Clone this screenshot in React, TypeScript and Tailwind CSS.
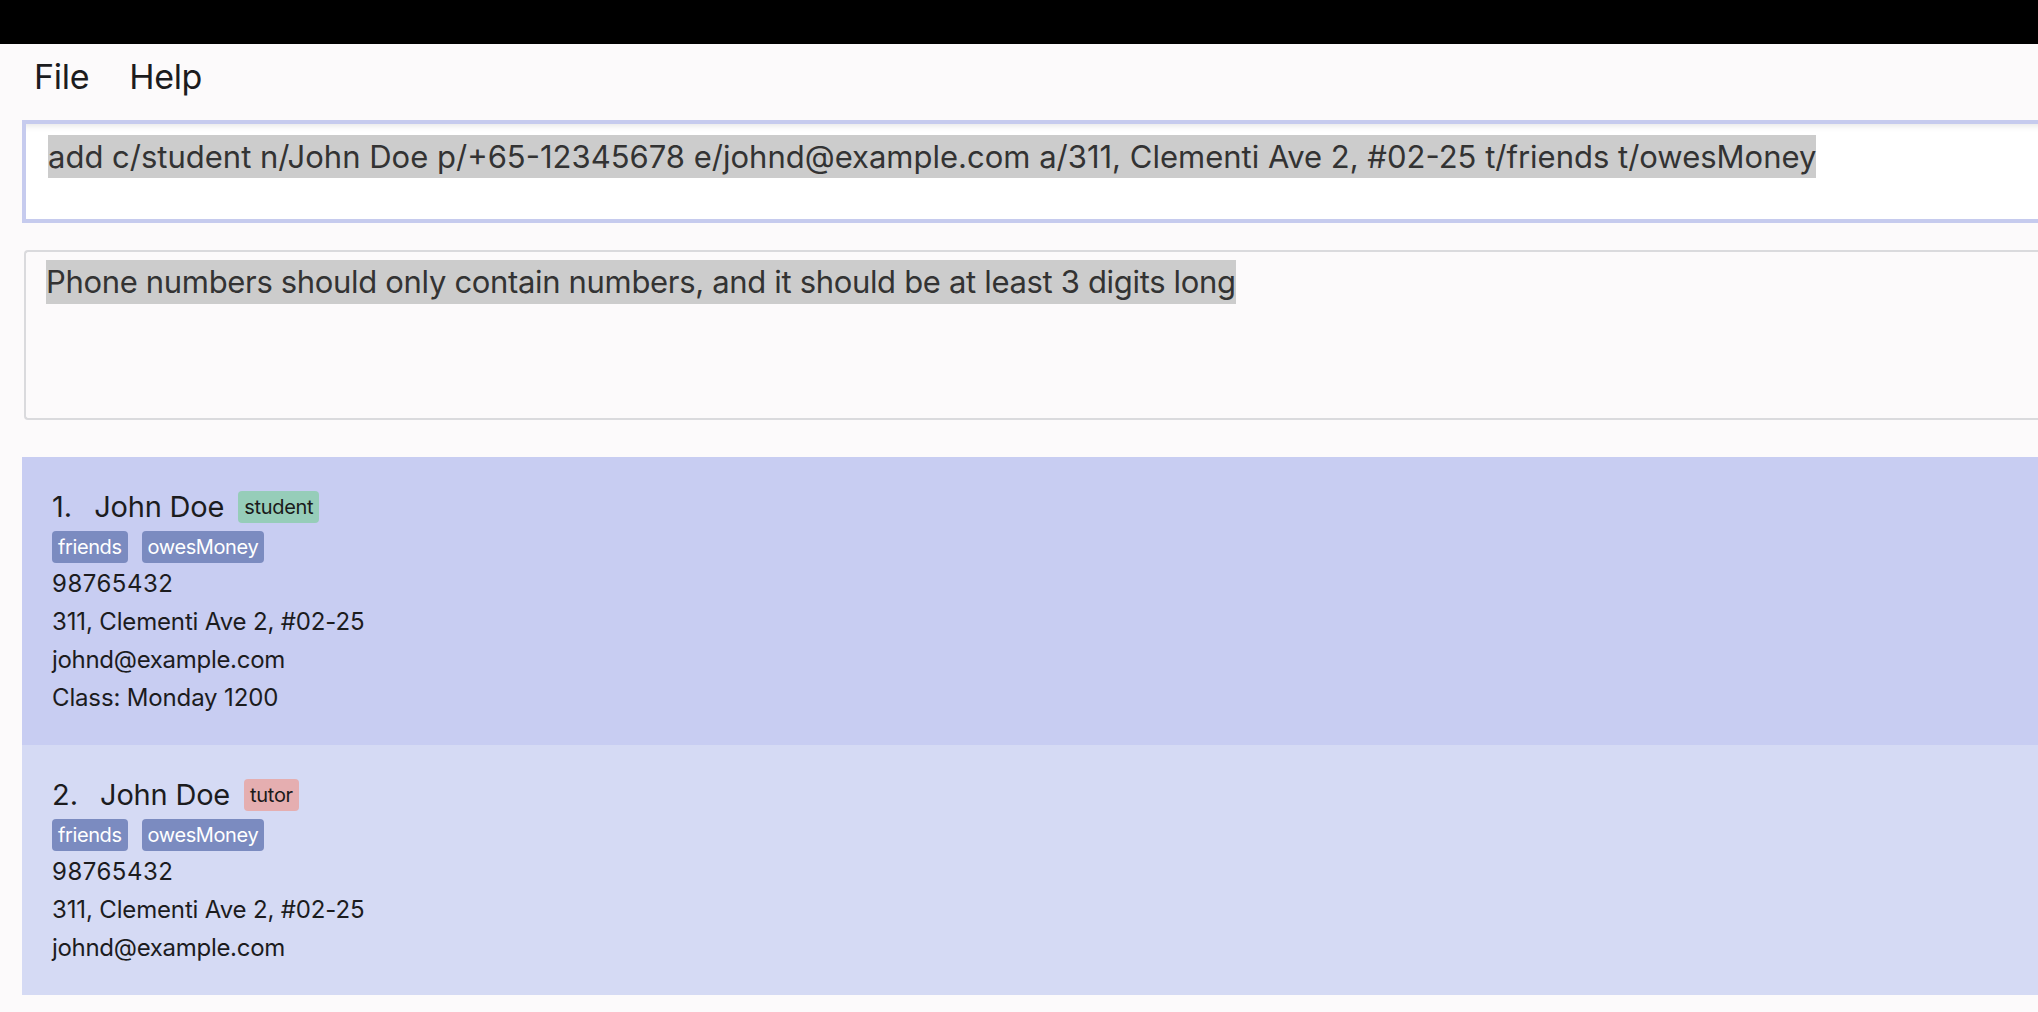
import React from "react";

type Person = {
  id: number;
  name: string;
  role: string;
  tags: string[];
  phone: string;
  address: string;
  email: string;
  classTime?: string;
};

const people: Person[] = [
  {
    id: 1,
    name: "John Doe",
    role: "student",
    tags: ["friends", "owesMoney"],
    phone: "98765432",
    address: "311, Clementi Ave 2, #02-25",
    email: "johnd@example.com",
    classTime: "Monday 1200",
  },
  {
    id: 2,
    name: "John Doe",
    role: "tutor",
    tags: ["friends", "owesMoney"],
    phone: "98765432",
    address: "311, Clementi Ave 2, #02-25",
    email: "johnd@example.com",
  },
];

const PersonCard = ({ person, odd }: { person: Person; odd: boolean }) => {
  return (
    <div
      className={
        "pl-[30px] pt-[34px] pb-[28px] text-[#1c1c1e] " +
        (odd ? "bg-[#c8cdf2]" : "bg-[#d5daf4]")
      }
    >
      <div className="flex items-center h-[32px]">
        <span className="text-[29px] leading-[32px]">{person.id}.</span>
        <span className="ml-[22px] text-[29px] leading-[32px] tracking-[-0.2px]">
          {person.name}
        </span>
        <span
          className={
            "ml-[14px] px-[6px] h-[32px] rounded-[4px] text-[20px] leading-[32px] tracking-[-0.3px] text-[#1a1a1a] " +
            (person.role === "student" ? "bg-[#96cdb9]" : "bg-[#e5aeb0]")
          }
        >
          {person.role}
        </span>
      </div>
      <div className="flex gap-[14px] mt-[8px]">
        {person.tags.map((tag) => (
          <span
            key={tag}
            className="px-[6px] h-[32px] rounded-[4px] bg-[#7b8bc0] text-white text-[20px] leading-[32px] tracking-[-0.4px]"
          >
            {tag}
          </span>
        ))}
      </div>
      <div className="mt-[2px] text-[24px] leading-[38px] tracking-[-0.15px]">
        <div className="tracking-[0.5px]">{person.phone}</div>
        <div>{person.address}</div>
        <div className="tracking-[-0.3px]">{person.email}</div>
        {person.classTime && <div>Class: {person.classTime}</div>}
      </div>
    </div>
  );
};

export default function App() {
  return (
    <div
      className="w-[2038px] h-[1012px] overflow-hidden bg-[#fcfafb]"
      style={{ fontFamily: "Inter, 'Noto Sans', sans-serif" }}
    >
      <div className="h-[44px] bg-black" />
      <div className="h-[64px] flex items-center pl-[34px] gap-[40px] text-[34px] tracking-[-0.3px] text-[#1c1c1e]">
        <span>File</span>
        <span>Help</span>
      </div>

      <div className="mt-[12px] ml-[22px] h-[103px] border-[4px] border-r-0 border-[#c6cbee] bg-white shadow-[inset_0_8px_6px_-6px_rgba(0,0,0,0.10)] pl-[22px] pt-[11px]">
        <span className="inline-block bg-[#cccccc] text-[#333333] text-[31px] leading-[43px] whitespace-nowrap">
          add c/student n/John Doe p/+65-12345678 e/johnd@example.com a/311,
          Clementi Ave 2, #02-25 t/friends t/owesMoney
        </span>
      </div>

      <div className="mt-[27px] ml-[24px] h-[170px] border-[2px] border-r-0 border-[#dadadd] rounded-l-[4px] pl-[20px] pt-[8px]">
        <span className="inline-block bg-[#cccccc] text-[#333333] text-[31px] leading-[44px] tracking-[-0.33px] whitespace-nowrap">
          Phone numbers should only contain numbers, and it should be at least 3
          digits long
        </span>
      </div>

      <div className="mt-[37px] ml-[22px]">
        {people.map((p, i) => (
          <PersonCard key={i} person={p} odd={i % 2 === 0} />
        ))}
      </div>
    </div>
  );
}
